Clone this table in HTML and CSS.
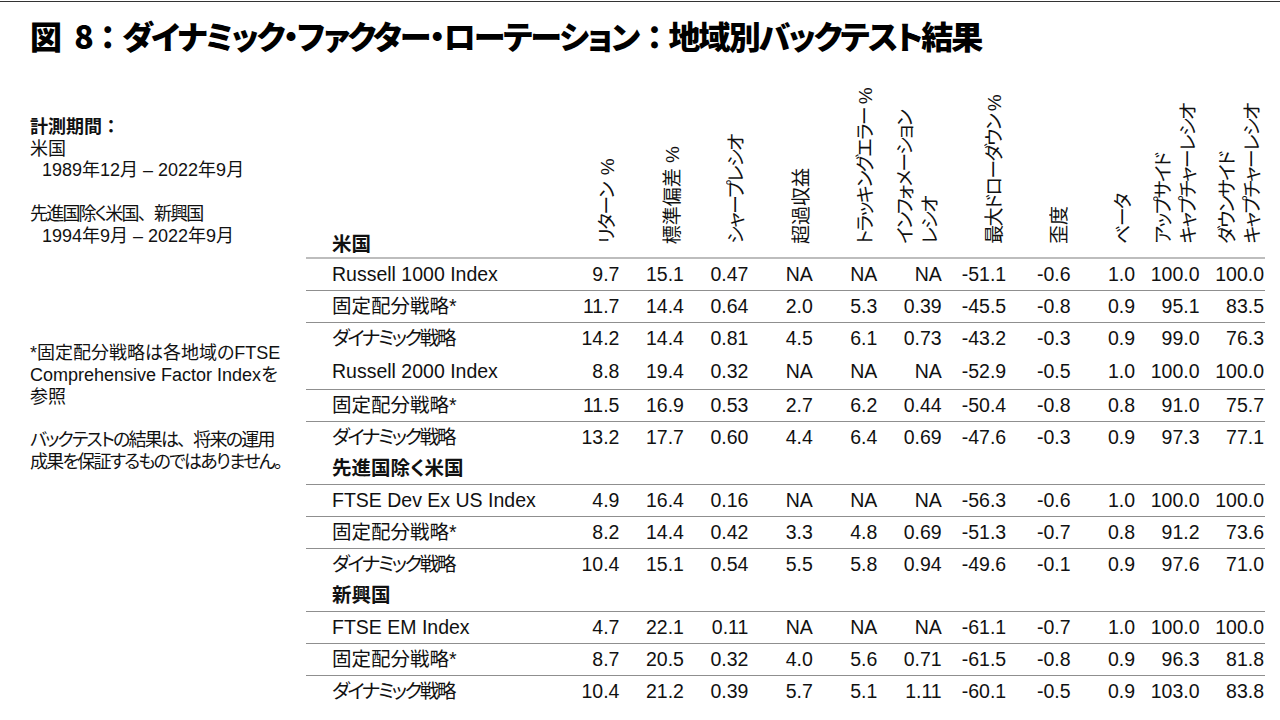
FILE: index.html
```html
<!DOCTYPE html>
<html lang="ja">
<head>
<meta charset="utf-8">
<title>図 8</title>
<link rel="stylesheet" href="styles.css">
</head>
<body>
<div class="topline"></div>
<h1 class="title">図&ensp;8<span class="fw">：</span>ダイナミック・ファクター・ローテーション<span class="fw">：</span>地域別バックテスト結果</h1>
<div class="content">
  <aside class="notes">
    <div class="period">
      <p class="label">計測期間<span class="fw">：</span></p>
      <p>米国</p>
      <p class="indent">1989年12月 – 2022年9月</p>
      <p class="gap jp">先進国除く米国<span class="fw">、</span>新興国</p>
      <p class="indent">1994年9月 – 2022年9月</p>
    </div>
    <div class="foot">
      <p>*固定配分戦略は各地域のFTSE<br>Comprehensive Factor Indexを<br>参照</p>
      <p class="gap jp">バックテストの結果は<span class="fw">、</span>将来の運用<br>成果を保証するものではありません。</p>
    </div>
  </aside>
  <table class="bt">
    <colgroup>
      <col class="c-label">
      <col><col><col><col><col><col><col><col><col><col><col>
    </colgroup>
    <thead>
      <tr>
        <th class="grp">米国</th>
        <th><span class="vt">リターン&ensp;%</span></th>
        <th><span class="vt kj">標準偏差 %</span></th>
        <th><span class="vt">シャープレシオ</span></th>
        <th><span class="vt kj">超過収益</span></th>
        <th><span class="vt">トラッキングエラー %</span></th>
        <th><span class="vt">インフォメーション<br>レシオ</span></th>
        <th><span class="vt">最大ドローダウン %</span></th>
        <th><span class="vt kj">歪度</span></th>
        <th><span class="vt">ベータ</span></th>
        <th><span class="vt">アップサイド<br>キャプチャーレシオ</span></th>
        <th><span class="vt">ダウンサイド<br>キャプチャーレシオ</span></th>
      </tr>
    </thead>
    <tbody>
      <tr><td>Russell 1000 Index</td><td>9.7</td><td>15.1</td><td>0.47</td><td>NA</td><td>NA</td><td>NA</td><td>-51.1</td><td>-0.6</td><td>1.0</td><td>100.0</td><td>100.0</td></tr>
      <tr class="ln"><td>固定配分戦略*</td><td>11.7</td><td>14.4</td><td>0.64</td><td>2.0</td><td>5.3</td><td>0.39</td><td>-45.5</td><td>-0.8</td><td>0.9</td><td>95.1</td><td>83.5</td></tr>
      <tr class="ln"><td class="kana">ダイナミック戦略</td><td>14.2</td><td>14.4</td><td>0.81</td><td>4.5</td><td>6.1</td><td>0.73</td><td>-43.2</td><td>-0.3</td><td>0.9</td><td>99.0</td><td>76.3</td></tr>
      <tr class="tall"><td>Russell 2000 Index</td><td>8.8</td><td>19.4</td><td>0.32</td><td>NA</td><td>NA</td><td>NA</td><td>-52.9</td><td>-0.5</td><td>1.0</td><td>100.0</td><td>100.0</td></tr>
      <tr class="ln"><td>固定配分戦略*</td><td>11.5</td><td>16.9</td><td>0.53</td><td>2.7</td><td>6.2</td><td>0.44</td><td>-50.4</td><td>-0.8</td><td>0.8</td><td>91.0</td><td>75.7</td></tr>
      <tr class="ln"><td class="kana">ダイナミック戦略</td><td>13.2</td><td>17.7</td><td>0.60</td><td>4.4</td><td>6.4</td><td>0.69</td><td>-47.6</td><td>-0.3</td><td>0.9</td><td>97.3</td><td>77.1</td></tr>
      <tr class="sec"><td class="grp" colspan="12">先進国除く米国</td></tr>
      <tr class="ln"><td>FTSE Dev Ex US Index</td><td>4.9</td><td>16.4</td><td>0.16</td><td>NA</td><td>NA</td><td>NA</td><td>-56.3</td><td>-0.6</td><td>1.0</td><td>100.0</td><td>100.0</td></tr>
      <tr class="ln"><td>固定配分戦略*</td><td>8.2</td><td>14.4</td><td>0.42</td><td>3.3</td><td>4.8</td><td>0.69</td><td>-51.3</td><td>-0.7</td><td>0.8</td><td>91.2</td><td>73.6</td></tr>
      <tr class="ln"><td class="kana">ダイナミック戦略</td><td>10.4</td><td>15.1</td><td>0.54</td><td>5.5</td><td>5.8</td><td>0.94</td><td>-49.6</td><td>-0.1</td><td>0.9</td><td>97.6</td><td>71.0</td></tr>
      <tr class="sec"><td class="grp" colspan="12">新興国</td></tr>
      <tr class="ln"><td>FTSE EM Index</td><td>4.7</td><td>22.1</td><td>0.11</td><td>NA</td><td>NA</td><td>NA</td><td>-61.1</td><td>-0.7</td><td>1.0</td><td>100.0</td><td>100.0</td></tr>
      <tr class="ln"><td>固定配分戦略*</td><td>8.7</td><td>20.5</td><td>0.32</td><td>4.0</td><td>5.6</td><td>0.71</td><td>-61.5</td><td>-0.8</td><td>0.9</td><td>96.3</td><td>81.8</td></tr>
      <tr class="ln"><td class="kana">ダイナミック戦略</td><td>10.4</td><td>21.2</td><td>0.39</td><td>5.7</td><td>5.1</td><td>1.11</td><td>-60.1</td><td>-0.5</td><td>0.9</td><td>103.0</td><td>83.8</td></tr>
    </tbody>
  </table>
</div>
</body>
</html>
```
FILE: styles.css
```css
html, body {
  margin: 0;
  padding: 0;
  background: #ffffff;
}
body {
  width: 1280px;
  height: 720px;
  overflow: hidden;
  color: #111111;
  font-family: "Liberation Sans", "Noto Sans CJK JP", sans-serif;
  font-feature-settings: "palt";
}
.fw {
  font-feature-settings: normal;
}
.topline {
  height: 1px;
  margin-top: 1px;
  background: #333333;
}
.title {
  margin: 0;
  padding: 13px 0 0 30px;
  height: 40px;
  font-family: "Noto Sans CJK JP", sans-serif;
  font-weight: 900;
  font-size: 32px;
  line-height: 40px;
  letter-spacing: -1.9px;
  color: #000000;
  white-space: nowrap;
}
.content {
  display: flex;
  align-items: flex-start;
  margin-top: 33px;
}
.notes {
  flex: none;
  width: 276px;
  padding: 29px 0 0 30px;
  font-size: 18px;
  line-height: 21.7px;
  white-space: nowrap;
}
.notes p {
  margin: 0;
}
.notes .label {
  font-weight: 700;
}
.notes .indent {
  padding-left: 12px;
}
.notes .gap {
  margin-top: 21.7px;
}
.notes .jp {
  letter-spacing: -1.8px;
}
.foot {
  margin-top: 96px;
}
.bt {
  flex: none;
  width: 959px;
  table-layout: fixed;
  border-collapse: collapse;
  font-size: 19.5px;
  line-height: 23px;
}
.c-label {
  width: 250px;
}
.bt thead tr {
  height: 170px;
}
.bt th {
  height: 161px;
  font-weight: 400;
  vertical-align: bottom;
  text-align: right;
  padding: 0 0 8px 0;
  border-bottom: 2px solid #bdbdbd;
}
.bt th.grp,
.bt td.grp {
  font-weight: 700;
  text-align: left;
  padding: 0 0 0 26px;
}
.bt th.grp {
  padding-bottom: 1px;
}
.vt {
  display: inline-block;
  writing-mode: vertical-rl;
  text-orientation: sideways;
  transform: rotate(180deg);
  text-align: left;
  font-size: 19px;
  line-height: 25px;
  letter-spacing: -1.6px;
  white-space: nowrap;
}
.vt.kj {
  letter-spacing: 0;
}
.bt tbody tr {
  height: 32px;
}
.bt tbody tr.tall {
  height: 35px;
}
.bt tbody tr.sec {
  height: 31px;
}
.bt td {
  padding: 0 1px 0 0;
  text-align: right;
  vertical-align: middle;
  white-space: nowrap;
}
.bt td:first-child {
  text-align: left;
  padding-left: 26px;
}
.bt td.kana {
  letter-spacing: -2.4px;
}
.bt tr.ln td {
  border-top: 1px solid #8f8f8f;
}
```
